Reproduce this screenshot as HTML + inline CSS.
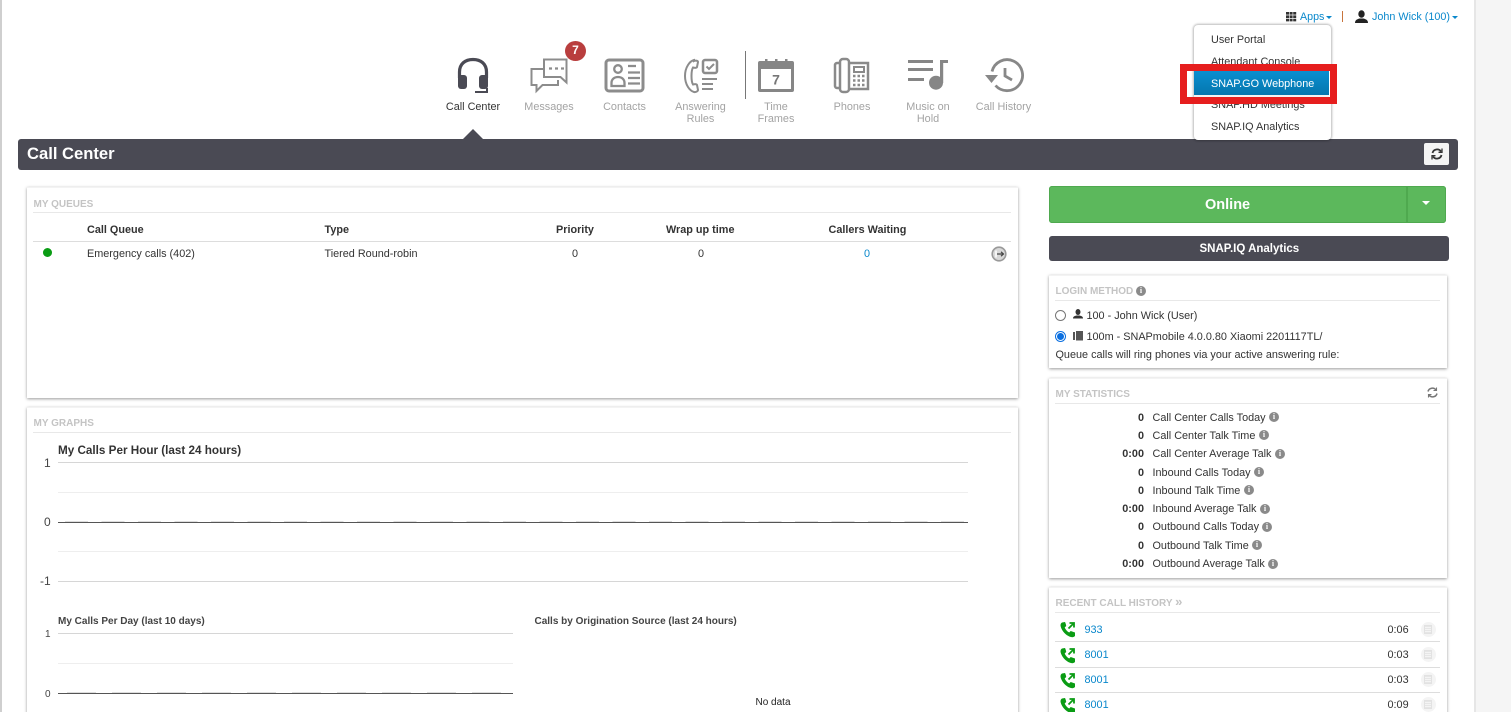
<!DOCTYPE html>
<html><head><meta charset="utf-8"><title>Call Center</title>
<style>
html,body{margin:0;padding:0;width:1511px;height:712px;overflow:hidden;background:#f5f5f5}
#w{position:absolute;left:0;top:0;width:1511px;height:712px;overflow:hidden;font-family:"Liberation Sans",Arial,sans-serif;font-size:10.85px;color:#333}
.a{position:absolute;white-space:nowrap;line-height:13px}
.abs{position:absolute}
.nav{position:absolute;width:76px;text-align:center;line-height:12px;color:#a3a3a3;font-size:10.85px;top:101px}
.panel{position:absolute;background:#fff;box-shadow:0 1px 3px rgba(0,0,0,.4);border-top:1px solid #f3f3f3}
.h{position:absolute;font-size:10px;font-weight:bold;color:#c4c4c4;line-height:12px;white-space:nowrap}
.ln{position:absolute;height:1px;background:#e8e8e8}
.b{font-weight:bold}
.i{position:absolute;width:10px;height:10px;border-radius:50%;background:#8a8a8a;color:#fff;font:bold 8px/10px "Liberation Serif",serif;text-align:center}
.r{position:absolute;text-align:right;width:60px;font-weight:bold;left:1084px;line-height:13px}
.lb{position:absolute;left:1152.5px;line-height:13px;white-space:nowrap}
.blue{color:#0a88cc}
.g1{position:absolute;height:1px;background:#d6d6d6}
.g2{position:absolute;height:1px;background:#eee}
.g3{position:absolute;height:1px;background:#555}
.m{position:absolute;left:1211px;line-height:13px;color:#333;white-space:nowrap}
.ph{position:absolute;left:1060px}
.rc{position:absolute;width:15px;height:15px;left:1420.5px;border-radius:50%;background:#f4f4f4}
.rc:after{content:"";position:absolute;left:3.5px;top:3px;width:6px;height:7px;border:1px solid #e2e2e2;background:repeating-linear-gradient(#e6e6e6 0 1px,transparent 1px 2px)}
svg{position:absolute;overflow:visible}
</style></head><body><div id="w">
<div class="abs" style="left:0;top:0;width:2px;height:712px;background:#cfcfcf"></div>
<div class="abs" style="left:1474px;top:0;width:2px;height:712px;background:#e6e6e6"></div>
<div class="abs" style="left:2px;top:0;width:1472px;height:712px;background:#fff"></div>

<!-- top right -->
<svg style="left:1286px;top:12px" width="10" height="10" fill="#333"><path d="M0 0h3v2.600H0zM3.600 0h3v2.600h-3zM7.200 0h3v2.600h-3zM0 3.400h3V6H0zM3.600 3.400h3V6h-3zM7.200 3.400h3V6h-3zM0 6.800h3v2.600H0zM3.600 6.800h3v2.600h-3zM7.200 6.800h3v2.600h-3z"/></svg>
<div class="a blue" style="left:1300px;top:11px;font-size:10.700px">Apps</div>
<div class="abs" style="left:1326px;top:16px;border:3px solid transparent;border-top-color:#0a88cc;border-bottom:0"></div>
<div class="abs" style="left:1342px;top:11px;width:1px;height:11px;background:#c8743c"></div>
<svg style="left:1355px;top:10px" width="13" height="13" fill="#222"><ellipse cx="6.500" cy="4" rx="3.200" ry="3.800"/><path d="M0 13c0-3 2-3.800 4.500-4.500h4C11 9.200 13 10 13 13z"/></svg>
<div class="a blue" style="left:1372px;top:11px;font-size:10.800px">John Wick (100)</div>
<div class="abs" style="left:1452px;top:16px;border:3px solid transparent;border-top-color:#0a88cc;border-bottom:0"></div>

<!-- nav icons -->
<svg style="left:457px;top:58px" width="32" height="36" fill="none" stroke="#4a4a54">
<path d="M2.500 20V14C2.500 6 8 1.500 16 1.500S29.500 6 29.500 14v6" stroke-width="3.200"/>
<rect x="1" y="17" width="9" height="14" rx="3" fill="#4a4a54" stroke="none"/>
<rect x="22" y="17" width="9" height="14" rx="3" fill="#4a4a54" stroke="none"/>
<path d="M18 34h12v-4" stroke-width="2"/></svg>
<svg style="left:530px;top:58px" width="38" height="36" fill="none" stroke="#8c8c8c" stroke-width="2"><path d="M14 1.500h22.500v23l-6-5.500H14z"/><path d="M13 11H1.500v16h5v6l6-6H28v-5"/><path d="M19 10.500h3M25 10.500h3M31 10.500h3" stroke-width="2.200"/></svg>
<div class="abs" style="left:565px;top:41px;width:21px;height:20px;border-radius:50%;background:#b93e3e;color:#fff;font:bold 12px/19px 'Liberation Sans',sans-serif;text-align:center">7</div>
<svg style="left:604px;top:58px" width="41" height="35" fill="none" stroke="#8c8c8c" stroke-width="3"><rect x="2" y="2" width="37" height="31" rx="3"/><circle cx="14" cy="11" r="3.800" stroke-width="2.300"/><path d="M7.500 28v-3c0-4 3-6 6.500-6s6.500 2 6.500 6v3z" stroke-width="2.300"/><path d="M24 8h8M24 14.500h12M24 20h12M24 25.500h12" stroke-width="2.300"/></svg>
<svg style="left:684px;top:58px" width="36" height="36" fill="none" stroke="#8c8c8c" stroke-width="2"><path d="M10 2c-4 1-9 7-9 16s5 15 9 16c2 .5 4-1 4-2l-1-5c-.5-1-2-1-4-.5-2-3-2-14 0-17 2 .5 3.500 .5 4-.5l1-5c0-1-2-2-4-1z"/><rect x="19" y="2" width="14" height="13" rx="2" stroke-width="2.500"/><path d="M22.500 8.500l2.500 2.500 5-5"/><path d="M18 21h15M18 26h11M18 31h11" stroke-width="2"/></svg>
<div class="abs" style="left:745px;top:51px;width:1px;height:48px;background:#777"></div>
<svg style="left:758px;top:58px" width="37" height="35" fill="#868686"><rect x="7" y="1" width="2.500" height="3"/><rect x="17" y="1" width="2.500" height="3"/><rect x="27" y="1" width="2.500" height="3"/><path d="M2 3h32a2 2 0 0 1 2 2v27a2 2 0 0 1-2 2H2a2 2 0 0 1-2-2V5a2 2 0 0 1 2-2zm1 8v20h30V11z" fill-rule="evenodd"/><text x="18" y="26.500" text-anchor="middle" font-family="Liberation Sans" font-weight="bold" font-size="14" fill="#777">7</text></svg>
<svg style="left:834px;top:58px" width="36" height="35" fill="none" stroke="#8a8a8a" stroke-width="2"><rect x="6" y="1" width="9" height="33" rx="3" stroke-width="2.500"/><path d="M6 5H3a2 2 0 0 0-2 2v21a2 2 0 0 0 2 2h3M15 5h19v26H15" stroke-width="2.500"/><rect x="20" y="9" width="10" height="5"/><path d="M19 18h13M19 22.500h13M19 27h13" stroke-width="2.500" stroke-dasharray="2.500 2"/></svg>
<svg style="left:908px;top:58px" width="40" height="35" fill="#868686"><rect x="0" y="2" width="25" height="3"/><rect x="0" y="10" width="25" height="3"/><rect x="0" y="20" width="16" height="3"/><circle cx="28" cy="24.700" r="7"/><rect x="32" y="3" width="3.200" height="22"/><rect x="32" y="2" width="8" height="3"/></svg>
<svg style="left:984px;top:58px" width="42" height="35" fill="none" stroke="#888" stroke-width="2.800"><path d="M8 13.500A15.500 15.500 0 1 1 11.500 27.500"/><path d="M1 17h13l-6.500 8z" fill="#888" stroke="none"/><path d="M21 10v8l7 4"/></svg>

<div class="nav" style="left:435px;color:#333">Call Center</div>
<div class="nav" style="left:511px">Messages</div>
<div class="nav" style="left:586.500px">Contacts</div>
<div class="nav" style="left:662.500px">Answering<br>Rules</div>
<div class="nav" style="left:738px">Time<br>Frames</div>
<div class="nav" style="left:814px">Phones</div>
<div class="nav" style="left:890px">Music on<br>Hold</div>
<div class="nav" style="left:965.500px">Call History</div>

<!-- title bar -->
<div class="abs" style="left:18px;top:139px;width:1440px;height:31px;background:#4a4a54;border-radius:3px"></div>
<div class="abs" style="left:463px;top:129px;border:10px solid transparent;border-bottom-color:#4a4a54;border-top:0"></div>
<div class="a b" style="left:27px;top:144px;font-size:16.600px;line-height:19px;color:#fff">Call Center</div>
<div class="abs" style="left:1424px;top:143px;width:25px;height:22px;background:#f4f4f4;border-radius:2px"></div>
<svg style="left:1431px;top:148px" width="12" height="12" fill="none" stroke="#333" stroke-width="1.800"><path d="M1.500 5a4.700 4.700 0 0 1 8.500-1.500M10.500 7a4.700 4.700 0 0 1-8.500 1.500"/><path d="M11 .5v3.800H7.500M1 11.500V7.700h3.500" stroke-width="1.300"/></svg>

<!-- dropdown -->
<div class="abs" style="left:1194px;top:25px;width:137px;height:115px;background:#fff;border-radius:4px;box-shadow:0 0 2px 1px rgba(0,0,0,.28)"></div>
<div class="m" style="top:33.500px">User Portal</div>
<div class="m" style="top:55.500px">Attendant Console</div>
<div class="m" style="top:98.500px">SNAP.HD Meetings</div>
<div class="m" style="top:120.500px">SNAP.IQ Analytics</div>
<div class="abs" style="left:1194px;top:71px;width:135px;height:24px;background:linear-gradient(#0a8fd0,#0576ae)"></div>
<div class="abs" style="left:1194px;top:95px;width:135px;height:2px;background:#f2f2f2"></div>
<div class="m" style="top:77.500px;color:#fff">SNAP.GO Webphone</div>
<div class="abs" style="left:1180px;top:64px;width:157px;height:40px;border:7px solid #e61e1e;box-sizing:border-box"></div>

<!-- My queues -->
<div class="panel" style="left:27px;top:187px;width:991px;height:210px"></div>
<div class="h" style="left:33.500px;top:199px">MY QUEUES</div>
<div class="ln" style="left:33px;top:212px;width:978px"></div>
<div class="a b" style="left:87px;top:224px">Call Queue</div>
<div class="a b" style="left:324.500px;top:224px">Type</div>
<div class="a b" style="left:556px;top:224px">Priority</div>
<div class="a b" style="left:666px;top:224px">Wrap up time</div>
<div class="a b" style="left:828.500px;top:224px">Callers Waiting</div>
<div class="abs" style="left:33px;top:241px;width:978px;height:1px;background:#ddd"></div>
<div class="abs" style="left:43px;top:248px;width:9px;height:9px;border-radius:50%;background:#0a9c14"></div>
<div class="a" style="left:87px;top:248px">Emergency calls (402)</div>
<div class="a" style="left:324.500px;top:248px">Tiered Round-robin</div>
<div class="a" style="left:572px;top:248px">0</div>
<div class="a" style="left:698px;top:248px">0</div>
<div class="a blue" style="left:864px;top:248px">0</div>
<svg style="left:991px;top:246px" width="16" height="16"><circle cx="8" cy="8" r="6.800" fill="#d8d8d8" stroke="#999" stroke-width="1.600"/><path d="M5 4.500v7" stroke="#fff" stroke-width="1.500"/><path d="M6 8h6M10 5.800L12.500 8 10 10.200" fill="none" stroke="#444" stroke-width="1.200"/></svg>

<!-- My graphs -->
<div class="panel" style="left:27px;top:407px;width:991px;height:320px"></div>
<div class="h" style="left:33.500px;top:418px">MY GRAPHS</div>
<div class="ln" style="left:33px;top:432px;width:978px"></div>
<div class="a b" style="left:58px;top:444px;font-size:11.700px;line-height:14px">My Calls Per Hour (last 24 hours)</div>
<div class="g1" style="left:58px;top:462px;width:910px"></div>
<div class="g2" style="left:58px;top:492px;width:910px"></div>
<div class="abs" style="left:65px;top:521px;width:903px;height:1px;background:repeating-linear-gradient(90deg,#ddd 0 23px,transparent 23px 36.500px)"></div>
<div class="g3" style="left:58px;top:522px;width:910px"></div>
<div class="g2" style="left:58px;top:551px;width:910px"></div>
<div class="g1" style="left:58px;top:581px;width:910px"></div>
<div class="a" style="left:44px;top:457px;font-size:12px;color:#444">1</div>
<div class="a" style="left:44px;top:516px;font-size:12px;color:#444">0</div>
<div class="a" style="left:40px;top:575px;font-size:12px;color:#444">-1</div>
<div class="a b" style="left:58px;top:614.500px;font-size:10px;color:#444">My Calls Per Day (last 10 days)</div>
<div class="g1" style="left:58px;top:633px;width:455px"></div>
<div class="g2" style="left:58px;top:663px;width:455px"></div>
<div class="abs" style="left:67px;top:692px;width:446px;height:1px;background:repeating-linear-gradient(90deg,#ddd 0 29px,transparent 29px 45px)"></div>
<div class="g3" style="left:58px;top:693px;width:455px"></div>
<div class="a" style="left:45px;top:628px;font-size:10px;color:#444">1</div>
<div class="a" style="left:45px;top:688px;font-size:10px;color:#444">0</div>
<div class="a b" style="left:534.500px;top:614.500px;font-size:10px;color:#444">Calls by Origination Source (last 24 hours)</div>
<div class="a" style="left:755.500px;top:696px;font-size:10px;color:#222">No data</div>

<!-- Online -->
<div class="abs" style="left:1049px;top:186px;width:358px;height:37px;background:#5cb85c;border-radius:3px 0 0 3px;box-shadow:inset 0 0 0 1px #4fa94f"></div>
<div class="abs" style="left:1407px;top:186px;width:39px;height:37px;background:#5cb85c;border-radius:0 3px 3px 0;box-shadow:inset 0 0 0 1px #4fa94f"></div>
<div class="a b" style="left:1205px;top:197px;font-size:14.500px;line-height:16px;color:#fff">Online</div>
<div class="abs" style="left:1422px;top:201px;border:4px solid transparent;border-top-color:#fff;border-bottom:0"></div>
<div class="abs" style="left:1049px;top:236px;width:400px;height:25px;background:#4a4a54;border-radius:3px"></div>
<div class="a b" style="left:1199.500px;top:242px;font-size:11.500px;line-height:14px;color:#fff">SNAP.IQ Analytics</div>

<!-- Login method -->
<div class="panel" style="left:1049px;top:275px;width:398px;height:92px"></div>
<div class="h" style="left:1055.500px;top:286px">LOGIN METHOD</div>
<div class="i" style="left:1136px;top:286px">i</div>
<div class="ln" style="left:1055px;top:300px;width:385px"></div>
<div class="abs" style="left:1055px;top:310px;width:9px;height:9px;border:1px solid #767676;border-radius:50%"></div>
<svg style="left:1073px;top:309px" width="10" height="10" fill="#333"><ellipse cx="5" cy="3" rx="2.500" ry="3"/><path d="M0 9.500c0-2 1.500-2.500 3.500-3h3c2 .5 3.500 1 3.500 3z"/></svg>
<div class="a" style="left:1086.500px;top:309.500px">100 - John Wick (User)</div>
<div class="abs" style="left:1055px;top:331px;width:9px;height:9px;border:1px solid #0a6fe0;border-radius:50%"></div>
<div class="abs" style="left:1057px;top:333px;width:7px;height:7px;background:#0a6fe0;border-radius:50%"></div>
<svg style="left:1073px;top:331px" width="10" height="10" fill="#555"><rect x="0" y="1" width="2" height="8"/><rect x="3" y="0" width="7" height="9.500"/></svg>
<div class="a" style="left:1086.500px;top:331px">100m - SNAPmobile 4.0.0.80 Xiaomi 2201117TL/</div>
<div class="a" style="left:1055.500px;top:349px">Queue calls will ring phones via your active answering rule:</div>

<!-- My stats -->
<div class="panel" style="left:1049px;top:378px;width:398px;height:199px"></div>
<div class="h" style="left:1055.500px;top:389px">MY STATISTICS</div>
<svg style="left:1427px;top:387px" width="11" height="11" fill="none" stroke="#777" stroke-width="1.500"><path d="M1 4.500a4.500 4.500 0 0 1 8-1.500M10 6.500a4.500 4.500 0 0 1-8 1.500"/><path d="M9.500 .5v3H6.500M1.500 10.500v-3h3" stroke-width="1.100"/></svg>
<div class="ln" style="left:1055px;top:403px;width:385px"></div>

<div class="r" style="top:412px">0</div><div class="lb" style="top:412px">Call Center Calls Today</div><div class="i" style="left:1269px;top:412px">i</div>
<div class="r" style="top:430px">0</div><div class="lb" style="top:430px">Call Center Talk Time</div><div class="i" style="left:1259px;top:430px">i</div>
<div class="r" style="top:448px">0:00</div><div class="lb" style="top:448px">Call Center Average Talk</div><div class="i" style="left:1275px;top:449px">i</div>
<div class="r" style="top:467px">0</div><div class="lb" style="top:467px">Inbound Calls Today</div><div class="i" style="left:1254px;top:467px">i</div>
<div class="r" style="top:485px">0</div><div class="lb" style="top:485px">Inbound Talk Time</div><div class="i" style="left:1244px;top:485px">i</div>
<div class="r" style="top:503px">0:00</div><div class="lb" style="top:503px">Inbound Average Talk</div><div class="i" style="left:1260px;top:504px">i</div>
<div class="r" style="top:521px">0</div><div class="lb" style="top:521px">Outbound Calls Today</div><div class="i" style="left:1262px;top:522px">i</div>
<div class="r" style="top:540px">0</div><div class="lb" style="top:540px">Outbound Talk Time</div><div class="i" style="left:1252px;top:540px">i</div>
<div class="r" style="top:558px">0:00</div><div class="lb" style="top:558px">Outbound Average Talk</div><div class="i" style="left:1268px;top:559px">i</div>

<!-- Recent -->
<div class="panel" style="left:1049px;top:587px;width:398px;height:140px"></div>
<div class="h" style="left:1055.500px;top:597px">RECENT CALL HISTORY <span style="font-size:13px;line-height:10px">&raquo;</span></div>
<div class="ln" style="left:1055px;top:612px;width:385px"></div>
<div class="abs" style="left:1055px;top:641px;width:385px;height:1px;background:#ddd"></div>
<div class="abs" style="left:1055px;top:667px;width:385px;height:1px;background:#ddd"></div>
<div class="abs" style="left:1055px;top:692px;width:385px;height:1px;background:#ddd"></div>

<svg class="ph" style="top:622px" width="16" height="16"><path d="M2 .5L5 0c.5 1 1.200 3 1.200 4L4.700 5.500c.8 2 2.500 4 4.500 5l1.500-1.500 4.300 1.500V14c-1 1-2.500 1.500-4 1C6 14 1 8 .5 3.500 .5 2 1 1 2 .5z" fill="#0a9c14"/><path d="M8.500 6.500l4.500-4.500M9.500 1h4.500v4.500" fill="none" stroke="#0a9c14" stroke-width="1.800"/></svg>
<svg class="ph" style="top:647.500px" width="16" height="16"><path d="M2 .5L5 0c.5 1 1.200 3 1.200 4L4.700 5.500c.8 2 2.500 4 4.500 5l1.500-1.500 4.300 1.500V14c-1 1-2.500 1.500-4 1C6 14 1 8 .5 3.500 .5 2 1 1 2 .5z" fill="#0a9c14"/><path d="M8.500 6.500l4.500-4.500M9.500 1h4.500v4.500" fill="none" stroke="#0a9c14" stroke-width="1.800"/></svg>
<svg class="ph" style="top:672.500px" width="16" height="16"><path d="M2 .5L5 0c.5 1 1.200 3 1.200 4L4.700 5.500c.8 2 2.500 4 4.500 5l1.500-1.500 4.300 1.500V14c-1 1-2.500 1.500-4 1C6 14 1 8 .5 3.500 .5 2 1 1 2 .5z" fill="#0a9c14"/><path d="M8.500 6.500l4.500-4.500M9.500 1h4.500v4.500" fill="none" stroke="#0a9c14" stroke-width="1.800"/></svg>
<svg class="ph" style="top:697.500px" width="16" height="16"><path d="M2 .5L5 0c.5 1 1.200 3 1.200 4L4.700 5.500c.8 2 2.500 4 4.500 5l1.500-1.500 4.300 1.500V14c-1 1-2.500 1.500-4 1C6 14 1 8 .5 3.500 .5 2 1 1 2 .5z" fill="#0a9c14"/><path d="M8.500 6.500l4.500-4.500M9.500 1h4.500v4.500" fill="none" stroke="#0a9c14" stroke-width="1.800"/></svg>

<div class="a blue" style="left:1084.500px;top:624px">933</div><div class="a" style="left:1387.500px;top:624px">0:06</div><div class="rc" style="top:622px"></div>
<div class="a blue" style="left:1084.500px;top:649px">8001</div><div class="a" style="left:1387.500px;top:649px">0:03</div><div class="rc" style="top:647px"></div>
<div class="a blue" style="left:1084.500px;top:674px">8001</div><div class="a" style="left:1387.500px;top:674px">0:03</div><div class="rc" style="top:672px"></div>
<div class="a blue" style="left:1084.500px;top:699px">8001</div><div class="a" style="left:1387.500px;top:699px">0:09</div><div class="rc" style="top:697px"></div>
</div></body></html>
